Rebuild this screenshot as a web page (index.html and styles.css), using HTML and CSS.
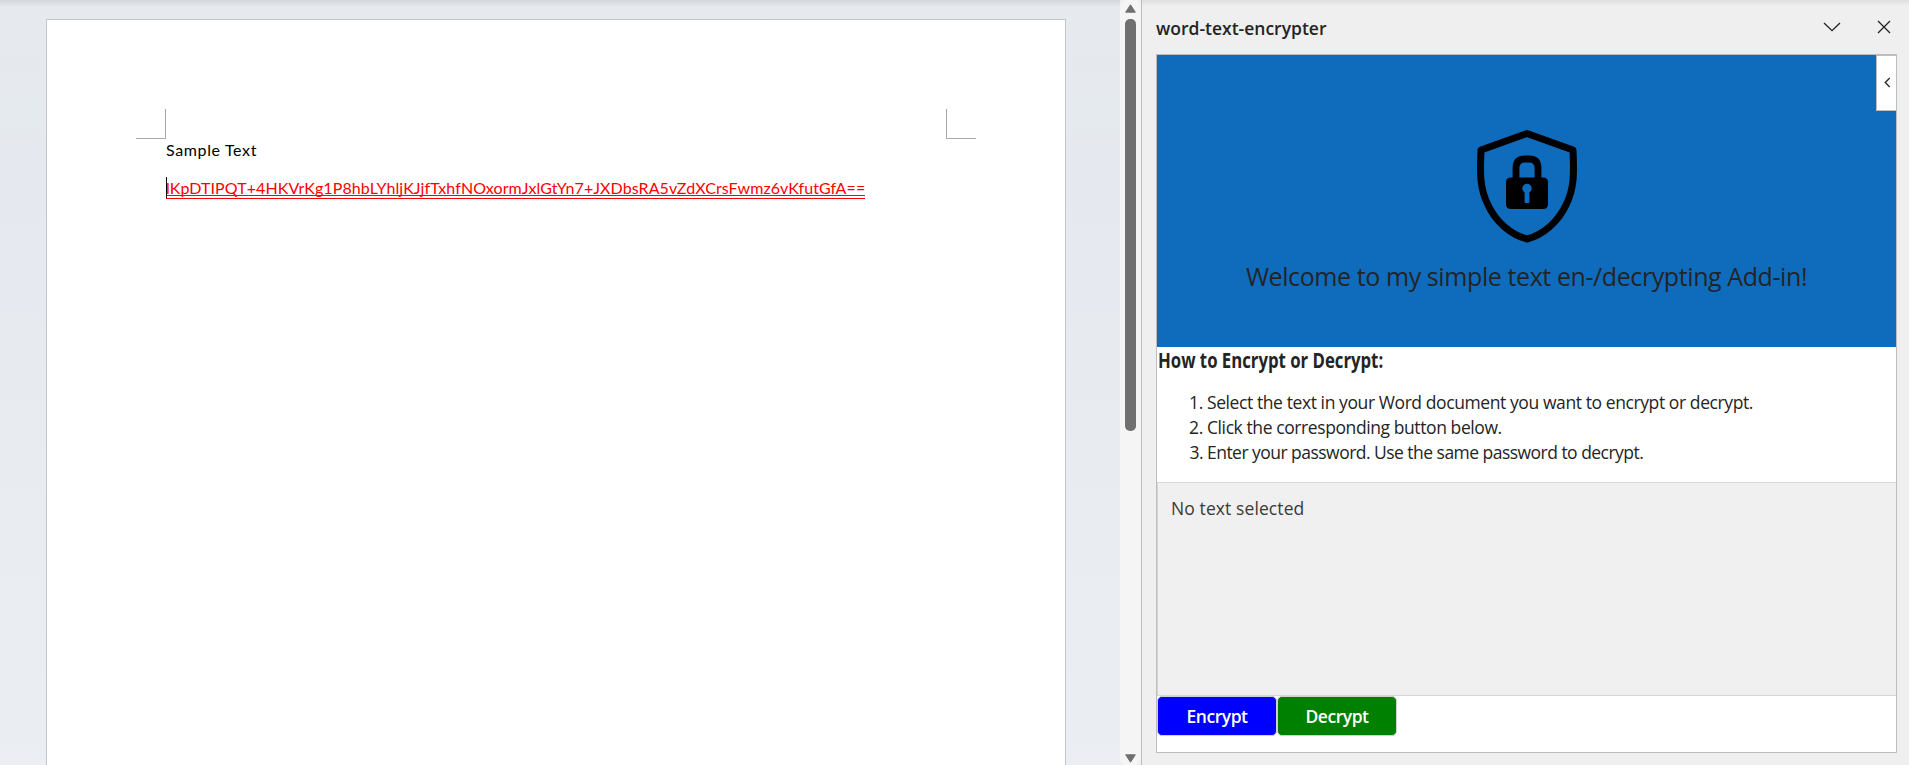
FILE: index.html
```html
<!DOCTYPE html>
<html lang="en">
<head>
<meta charset="utf-8">
<title>word-text-encrypter</title>
<link rel="stylesheet" href="styles.css">
</head>
<body>
<div class="app">
  <main class="canvas">
    <article class="page">
      <div class="marks"><span class="mark mark-left"></span><span class="mark mark-right"></span></div>
      <p class="para sample">Sample Text</p>
      <p class="para cipher-line"><span class="cipher">lKpDTIPQT+4HKVrKg1P8hbLYhljKJjfTxhfNOxormJxlGtYn7+JXDbsRA5vZdXCrsFwmz6vKfutGfA==</span></p>
    </article>
  </main>
  <div class="scrollbar">
    <svg class="arrow" width="11" height="9" viewBox="0 0 11 9"><path d="M5.5 .8 10.3 8.2H.7Z" fill="#707070" stroke="#707070" stroke-linejoin="round"/></svg>
    <div class="thumb"></div>
    <svg class="arrow arrow-down" width="11" height="9" viewBox="0 0 11 9"><path d="M5.5 8.2 .7 .8H10.3Z" fill="#707070" stroke="#707070" stroke-linejoin="round"/></svg>
  </div>
  <aside class="pane">
    <header class="pane-head">
      <h1 class="pane-title">word-text-encrypter</h1>
      <svg class="chevron" width="18" height="10" viewBox="0 0 18 10"><path d="M1 1 9 8.7 17 1" fill="none" stroke="#222" stroke-width="1.3"/></svg>
      <svg class="close" width="14" height="14" viewBox="0 0 14 14"><path d="M1 1 13 13M13 1 1 13" fill="none" stroke="#222" stroke-width="1.3"/></svg>
    </header>
    <div class="frame">
      <button class="flyout" aria-label="Open menu"><svg width="7" height="11" viewBox="0 0 7 11"><path d="M5.7 1 1.3 5.5 5.7 10" fill="none" stroke="#333" stroke-width="1.5"/></svg></button>
      <section class="hero">
        <svg class="shield" width="102" height="116" viewBox="0 0 102 116">
          <path d="M51 5.5 97 22C98 45 98.500 60 90 77C82 94 67 107 51 111C35 107 20 94 12 77C3.500 60 4 45 5 22Z" fill="none" stroke="#000" stroke-width="7" stroke-linejoin="round"/>
          <path d="M40 52V40Q40 31 49 31H53Q62 31 62 40V52" fill="none" stroke="#000" stroke-width="6.800"/>
          <rect x="30" y="49.500" width="42" height="31.500" rx="4.500" fill="#000"/>
          <circle cx="51" cy="60.500" r="4.700" fill="#0f6cbd"/>
          <rect x="48.600" y="61" width="4.800" height="14" rx="1" fill="#0f6cbd"/>
        </svg>
        <h2 class="welcome">Welcome to my simple text en-/decrypting Add-in!</h2>
      </section>
      <section class="howto">
        <h3>How to Encrypt or Decrypt:</h3>
        <ol>
          <li>Select the text in your Word document you want to encrypt or decrypt.</li>
          <li>Click the corresponding button below.</li>
          <li class="tight">Enter your password. Use the same password to decrypt.</li>
        </ol>
      </section>
      <div class="selection">No text selected</div>
      <div class="actions">
        <button class="btn encrypt">Encrypt</button>
        <button class="btn decrypt">Decrypt</button>
      </div>
    </div>
  </aside>
</div>
</body>
</html>
```
FILE: styles.css
```css
* { box-sizing: border-box; }
body { margin: 0; overflow: hidden; background: #efefef; }
h1, h2, h3, p, ol { margin: 0; font-weight: 400; }

.app {
  display: grid;
  grid-template-columns: 1120px 21px 1fr;
  height: 765px;
  font-family: "Open Sans", "Noto Sans", sans-serif;
  color: #242424;
}
.canvas {
  padding: 19px 54px 0 46px;
  background:
    linear-gradient(rgba(0, 0, 0, .08), rgba(0, 0, 0, 0) 7px),
    linear-gradient(#e6e9ee, #e5eaef 16%, #e5e8ee 22%, #ebeef2);
  overflow: hidden;
}
.page {
  height: 800px;
  border: 1px solid #c3c5c9;
  background: #fff;
  padding-top: 89px;
  color: #000;
  font: 16px/24px Lato, "Liberation Sans", sans-serif;
}
.marks { display: flex; justify-content: space-between; padding: 0 89px; }
.mark { width: 30px; height: 30px; border-bottom: 1px solid #a8a8a8; }
.mark-left { border-right: 1px solid #a8a8a8; }
.mark-right { border-left: 1px solid #a8a8a8; }
.para { padding-left: 119px; white-space: nowrap; }
.sample { margin-top: -1px; letter-spacing: .64px; }
.cipher-line { margin-top: 14px; color: #f00; }
.cipher {
  position: relative;
  display: inline-block;
  height: 23px;
  border-bottom: 4px double #f00;
  letter-spacing: .09px;
}
.cipher::before {
  content: "";
  position: absolute;
  left: 0;
  top: 1px;
  width: 1px;
  height: 21px;
  background: #000;
}

.scrollbar {
  display: flex;
  flex-direction: column;
  align-items: center;
  padding: 4px 0 2px;
  border-radius: 7px;
  background: #f5f5f5;
}
.thumb { width: 11px; height: 412px; margin-top: 6px; border-radius: 5px; background: #707070; }
.arrow-down { margin-top: auto; }

.pane {
  border-left: 1px solid #bdbdbd;
  padding: 0 12px 12px 14px;
  background: linear-gradient(rgba(0, 0, 0, .07), rgba(0, 0, 0, 0) 6px) #efefef;
  display: flex;
  flex-direction: column;
}
.pane-head { display: flex; height: 54px; padding-right: 6px; }
.pane-title { margin-right: auto; padding-top: 16px; font-size: 17.500px; font-weight: 600; line-height: 24px; }
.chevron { margin-top: 22px; }
.close { margin: 20px 0 0 36px; }
.frame { position: relative; flex: 1; border: 1px solid #bdbdbd; background: #fff; }
.flyout {
  position: absolute;
  top: 0;
  right: -1px;
  width: 21px;
  height: 56px;
  padding: 0 0 2px 1px;
  border: 1px solid #bdbdbd;
  background: #fff;
  display: flex;
  align-items: center;
  justify-content: center;
}
.hero {
  height: 292px;
  padding-top: 73px;
  background: #0f6cbd;
  display: flex;
  flex-direction: column;
  align-items: center;
}
.welcome { margin-top: 15px; font-size: 25px; line-height: 35px; letter-spacing: -.41px; white-space: nowrap; }
.howto { height: 135px; padding-left: 1px; font-size: 17.500px; line-height: 25px; }
.howto h3 {
  width: max-content;
  padding-top: 1px;
  font-weight: 700;
  transform: scaleX(.818);
  transform-origin: left;
}
.howto ol { margin-top: 17px; padding-left: 49px; letter-spacing: -.41px; }
.tight { letter-spacing: -.53px; }
.selection {
  height: 214px;
  border: 1px solid #d6d6d6;
  border-right: 0;
  background: #f0f0f0;
  padding: 11px 13px;
  font-size: 17.500px;
  line-height: 28px;
  letter-spacing: .1px;
  color: #3b3a39;
}
.actions { display: flex; }
.btn {
  width: 120px;
  height: 40px;
  border: 1px solid #d1d1d1;
  border-radius: 5px;
  color: #fff;
  font: 600 17.500px/24px "Open Sans", sans-serif;
  letter-spacing: -.45px;
}
.encrypt { background: #00f; }
.decrypt { background: #008000; }
```
